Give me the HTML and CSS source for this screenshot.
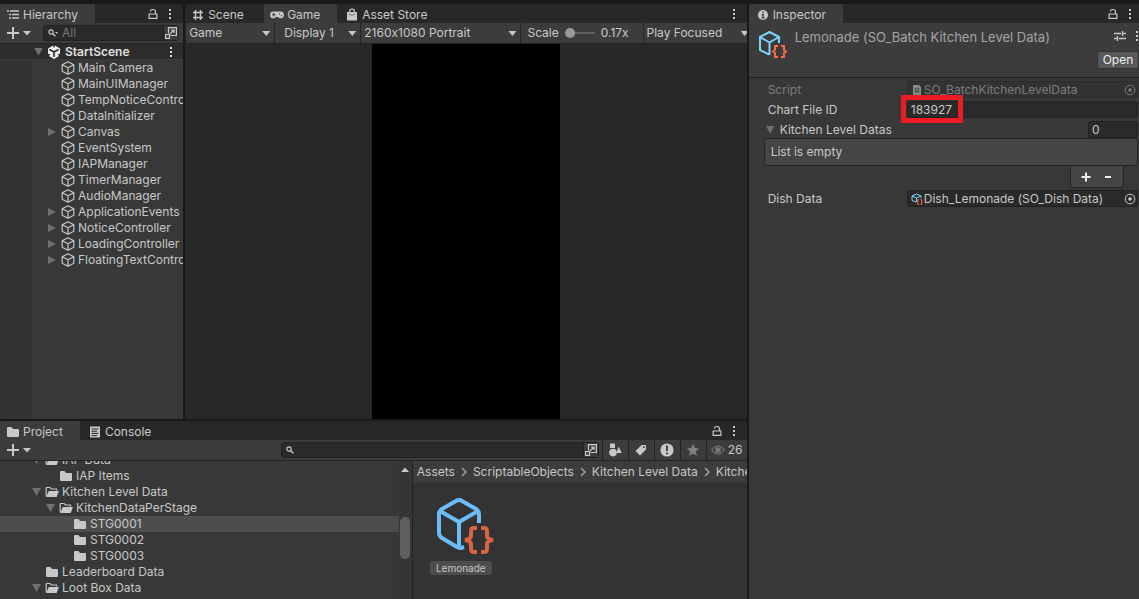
FILE: index.html
```html
<!DOCTYPE html>
<html lang="en">
<head>
<meta charset="utf-8">
<title>Lemonade - Editor</title>
<link rel="stylesheet" href="styles.css">
</head>
<body>
<svg class="sprites" aria-hidden="true">
  <symbol id="cube" viewBox="0 0 14 14"><path d="M7 .8 12.8 3.7V10.3L7 13.2 1.2 10.3V3.7ZM1.2 3.7 7 6.7 12.8 3.7M7 6.7V13.2" fill="none" stroke="currentColor" stroke-width="1.2" stroke-linejoin="round"/></symbol>
  <symbol id="folder" viewBox="0 0 14 12"><path d="M1 2Q1 1 2 1H5.5L7 3H12Q13 3 13 4V10Q13 11 12 11H2Q1 11 1 10Z" fill="currentColor"/></symbol>
  <symbol id="folder-open" viewBox="0 0 14 12"><path d="M1.2 10.5V2Q1.2 1.5 1.7 1.5H5L6.5 3H11.5V4.5" fill="none" stroke="currentColor" stroke-width="1.2"/><path d="M3.8 5H14L11.7 11H1.2Z" fill="currentColor"/></symbol>
  <symbol id="lock" viewBox="0 0 10 12"><path d="M2.5 3.5Q2.5 1.5 5 1.5T7.5 3.7V6M1.1 6H8.9V10.4H1.1Z" fill="none" stroke="currentColor" stroke-width="1.2"/></symbol>
  <symbol id="dots" viewBox="0 0 4 12"><path d="M1 1H3V3H1ZM1 5H3V7H1ZM1 9H3V11H1Z" fill="currentColor"/></symbol>
  <symbol id="plus" viewBox="0 0 12 12"><path d="M6 0V12M0 6H12" stroke="currentColor" stroke-width="2"/></symbol>
  <symbol id="caret" viewBox="0 0 8 5"><path d="M0 0H8L4 4.5Z" fill="currentColor"/></symbol>
  <symbol id="search" viewBox="0 0 10 8"><circle cx="3" cy="3" r="2.1" fill="none" stroke="currentColor" stroke-width="1.2"/><path d="M4.6 4.6 7.3 7.3" stroke="currentColor" stroke-width="1.4"/></symbol>
  <symbol id="popout" viewBox="0 0 12 12"><path d="M3.5 6.5V.6H11.4V8.5H5.5M.6 7.5H4.5V11.4H.6ZM5 7 9 3M6 3H9V6" fill="none" stroke="currentColor" stroke-width="1.2"/></symbol>
  <symbol id="so" viewBox="0 0 58 58"><g fill="none" stroke-linejoin="round"><path d="M28 51 25 52Q23 52 21 51L6 42Q3 40 3 37V18Q3 15 6 13L20 5Q23 3 26 5L40 13Q43 15 43 18V27M4 15 23 26 42 15M23 26V51" stroke="#6abdf8" stroke-width="4"/><path d="M41 32H38Q35 32 35 35V40Q35 43 29 44 35 45 35 48V53Q35 56 38 56H41M45 32H48Q51 32 51 35V40Q51 43 57 44 51 45 51 48V53Q51 56 48 56H45" stroke="#db6340" stroke-width="4" stroke-linejoin="miter"/></g></symbol>
  <symbol id="so-head" viewBox="0 0 30 30"><g fill="none" stroke-width="2"><path d="M12 25.5 3 21V8L12.5 3 22 8V14M3 8 12.5 13.5 22 8M12.5 13.5V26" stroke="#7bd3ff" stroke-linejoin="round"/><path d="M21 17H18V21L16 22.5 18 24V28H21M24 17H27V21L29 22.5 27 24V28H24" stroke="#ff6b3d"/></g></symbol>
  <symbol id="so-mini" viewBox="0 0 12 12"><g fill="none"><path d="M5 9 1 7.5V3L5.5 1 10 3V5M1 3 5.5 5 10 3M5.5 5V9" stroke="#7bd3ff"/><path d="M8 6.5H7V8.5L6 9 7 9.5V11.5H8M9.5 6.5H10.5V8.5L11.5 9 10.5 9.5V11.5H9.5" stroke="#ff6b3d"/></g></symbol>
  <symbol id="target" viewBox="0 0 12 12"><circle cx="6" cy="6" r="4.8" fill="none" stroke="currentColor"/><circle cx="6" cy="6" r="1.8" fill="currentColor"/></symbol>
  <symbol id="chevron" viewBox="0 0 6 10"><path d="M1 1 5 5 1 9" fill="none" stroke="currentColor" stroke-width="1.6"/></symbol>
</svg>
<main class="editor">
  <section class="panel hierarchy">
    <header class="tabs">
      <button class="tab active"><svg width="12" height="12" viewBox="0 0 12 12"><path d="M0 2H2M3 2H12M2 5.5H4M5 5.5H12M2 9H4M5 9H12" stroke="currentColor" stroke-width="1.3"/></svg>Hierarchy</button>
      <span class="tools"><button class="ico" aria-label="Lock"><svg width="10" height="12"><use href="#lock"/></svg></button><button class="ico" aria-label="More"><svg width="4" height="12"><use href="#dots"/></svg></button></span>
    </header>
    <div class="bar">
      <button class="ico add" aria-label="Add"><svg width="12" height="12"><use href="#plus"/></svg><svg width="8" height="5"><use href="#caret"/></svg></button>
      <label class="search"><svg width="10" height="8"><use href="#search"/><path d="M7 3H10L8.5 5Z" fill="currentColor"/></svg><input type="text" placeholder="All" aria-label="Search hierarchy"><span class="pop"><svg width="12" height="12"><use href="#popout"/></svg></span></label>
    </div>
    <div class="scene-row"><i class="down"></i><svg width="14" height="14" viewBox="0 0 14 14"><path d="M7 0 13 3.4V10.6L7 14 1 10.6V3.4Z" fill="#eee"/><path d="M7 7V12M7 7 2.5 4.5M7 7 11.5 4.5" stroke="#2c2c2c" stroke-width="1.6" fill="none"/><path d="M5.8 0H8.2L7 3.2ZM0 8.5 3.4 9.3 1 12ZM14 8.5 10.6 9.3 13 12Z" fill="#2c2c2c"/></svg><b>StartScene</b><button class="ico" aria-label="Scene menu"><svg width="4" height="12"><use href="#dots"/></svg></button></div>
    <ul class="tree objects">
      <li><i></i><svg><use href="#cube"/></svg>Main Camera</li>
      <li><i></i><svg><use href="#cube"/></svg>MainUIManager</li>
      <li><i></i><svg><use href="#cube"/></svg>TempNoticeController</li>
      <li><i></i><svg><use href="#cube"/></svg>DataInitializer</li>
      <li><i class="right"></i><svg><use href="#cube"/></svg>Canvas</li>
      <li><i></i><svg><use href="#cube"/></svg>EventSystem</li>
      <li><i></i><svg><use href="#cube"/></svg>IAPManager</li>
      <li><i></i><svg><use href="#cube"/></svg>TimerManager</li>
      <li><i></i><svg><use href="#cube"/></svg>AudioManager</li>
      <li><i class="right"></i><svg><use href="#cube"/></svg>ApplicationEvents</li>
      <li><i class="right"></i><svg><use href="#cube"/></svg>NoticeController</li>
      <li><i class="right"></i><svg><use href="#cube"/></svg>LoadingController</li>
      <li><i class="right"></i><svg><use href="#cube"/></svg>FloatingTextController</li>
    </ul>
  </section>

  <section class="panel game">
    <header class="tabs">
      <button class="tab scene-tab"><svg width="12" height="12" viewBox="0 0 12 12"><path d="M3.5 1V11M8.5 1V11M1 3.5H11M1 8.5H11" stroke="currentColor" stroke-width="1.4"/></svg>Scene</button>
      <button class="tab active game-tab"><svg width="14" height="10" viewBox="0 0 14 10"><path d="M3.5 1.5H10.5A3.3 3.3 0 0 1 10.5 8.3Q9 8.3 8 7H6Q5 8.3 3.5 8.3A3.4 3.4 0 0 1 3.5 1.5Z" fill="currentColor"/><path d="M2 4.8H5.4M3.7 3.1V6.5M9 4H10.2M10.8 5.7H12" stroke="#3c3c3c" stroke-width="1.1"/></svg>Game</button>
      <button class="tab store-tab"><svg width="12" height="14" viewBox="0 0 12 14"><path d="M1 4H11V12.5H1Z" fill="currentColor"/><path d="M3.7 5V3Q3.7 1.2 6 1.2T8.3 3V5" fill="none" stroke="currentColor" stroke-width="1.2"/><path d="M3.7 5.3V6.5Q6 8.5 8.3 6.5V5.3" fill="none" stroke="#777"/></svg>Asset Store</button>
      <span class="tools"><button class="ico" aria-label="More"><svg width="4" height="12"><use href="#dots"/></svg></button></span>
    </header>
    <div class="bar game-bar">
      <label class="pick mode"><select aria-label="View"><option>Game</option></select></label>
      <label class="pick display"><select aria-label="Display"><option>Display 1</option></select></label>
      <label class="pick ratio"><select aria-label="Resolution"><option>2160x1080 Portrait</option></select></label>
      <label class="scale">Scale<input type="range" min="0" max="100" value="0"><span>0.17x</span></label>
      <label class="pick focus"><select aria-label="Play mode"><option>Play Focused</option></select></label>
    </div>
    <div class="stage"><div class="screen"></div></div>
  </section>

  <section class="panel project">
    <header class="tabs">
      <button class="tab active"><svg width="14" height="12"><use href="#folder"/></svg>Project</button>
      <button class="tab console-tab"><svg width="12" height="12" viewBox="0 0 12 12"><path d="M1 .5H11V11.5H1Z" fill="currentColor"/><path d="M2.5 3H9.5M2.5 5.2H8M2.5 7.4H9.5M2.5 9.6H8" stroke="#282828"/></svg>Console</button>
      <span class="tools"><button class="ico" aria-label="Lock"><svg width="10" height="12"><use href="#lock"/></svg></button><button class="ico" aria-label="More"><svg width="4" height="12"><use href="#dots"/></svg></button></span>
    </header>
    <div class="bar project-bar">
      <button class="ico add" aria-label="Add"><svg width="12" height="12"><use href="#plus"/></svg><svg width="8" height="5"><use href="#caret"/></svg></button>
      <label class="search"><svg width="10" height="8"><use href="#search"/></svg><input type="text" aria-label="Search assets"><span class="pop"><svg width="12" height="12"><use href="#popout"/></svg></span></label>
      <button class="filter" aria-label="Filter by type"><svg width="14" height="14" viewBox="0 0 14 14"><path d="M2 .5H7V5H2ZM10.5 3.5 13.8 10H8.5Z" fill="currentColor"/><circle cx="5" cy="9.6" r="3.8" fill="currentColor"/></svg></button>
      <button class="filter" aria-label="Filter by label"><svg width="12" height="12" viewBox="0 0 12 12"><path fill-rule="evenodd" d="M6.5 1H11V5.5L5 11.5.5 7ZM9 2.3A.9.9 0 1 0 9 4.1.9.9 0 0 0 9 2.3" fill="currentColor"/></svg></button>
      <button class="filter" aria-label="Errors"><svg width="14" height="14" viewBox="0 0 14 14"><circle cx="7" cy="7" r="6.6" fill="currentColor"/><path d="M7 2.5V8M7 9.5V11.3" stroke="#333" stroke-width="1.7"/></svg></button>
      <button class="filter dim" aria-label="Favorites"><svg width="14" height="14" viewBox="0 0 14 14"><path d="M7 .8 8.8 5 13.2 5.4 9.8 8.3 10.8 12.8 7 10.4 3.2 12.8 4.2 8.3.8 5.4 5.2 5Z" fill="currentColor"/></svg></button>
      <button class="filter hidden-count"><svg width="14" height="10" viewBox="0 0 14 10"><path d="M.7 5Q7-3 13.3 5 7 13 .7 5Z" fill="none" stroke="#777" stroke-width="1.2"/><circle cx="7" cy="5" r="2.8" fill="#777"/></svg>26</button>
    </div>
    <div class="browser">
      <div class="folders">
        <ul class="tree">
          <li class="l1"><i class="down"></i><svg><use href="#folder-open"/></svg>IAP Data</li>
          <li class="l2"><i></i><svg><use href="#folder"/></svg>IAP Items</li>
          <li class="l1"><i class="down"></i><svg><use href="#folder-open"/></svg>Kitchen Level Data</li>
          <li class="l2"><i class="down"></i><svg><use href="#folder-open"/></svg>KitchenDataPerStage</li>
          <li class="l3 selected"><i></i><svg><use href="#folder"/></svg>STG0001</li>
          <li class="l3"><i></i><svg><use href="#folder"/></svg>STG0002</li>
          <li class="l3"><i></i><svg><use href="#folder"/></svg>STG0003</li>
          <li class="l1"><i></i><svg><use href="#folder"/></svg>Leaderboard Data</li>
          <li class="l1"><i class="down"></i><svg><use href="#folder-open"/></svg>Loot Box Data</li>
        </ul>
      </div>
      <div class="scroll"><svg width="8" height="5" viewBox="0 0 8 5"><path d="M0 5H8L4 .5Z" fill="currentColor"/></svg><span class="thumb"></span></div>
      <div class="assets">
        <nav class="crumbs"><a href="#">Assets</a><svg width="6" height="10"><use href="#chevron"/></svg><a href="#">ScriptableObjects</a><svg width="6" height="10"><use href="#chevron"/></svg><a href="#">Kitchen Level Data</a><svg width="6" height="10"><use href="#chevron"/></svg><a href="#">KitchenDataPerStage</a></nav>
        <figure class="asset"><svg width="58" height="58"><use href="#so"/></svg><figcaption>Lemonade</figcaption></figure>
      </div>
    </div>
  </section>

  <section class="panel inspector">
    <header class="tabs">
      <button class="tab active"><svg width="10" height="10" viewBox="0 0 10 10"><circle cx="5" cy="5" r="5" fill="currentColor"/><path d="M5 1.6V3.2M3.8 4.6H5.2V8M3.6 7.8H6.6" stroke="#333" stroke-width="1.3" fill="none"/></svg>Inspector</button>
      <span class="tools"><button class="ico" aria-label="Lock"><svg width="10" height="12"><use href="#lock"/></svg></button><button class="ico" aria-label="More"><svg width="4" height="12"><use href="#dots"/></svg></button></span>
    </header>
    <div class="head">
      <svg width="30" height="30"><use href="#so-head"/></svg>
      <h1>Lemonade (SO_Batch Kitchen Level Data)</h1>
      <div class="head-side">
        <span><button class="ico" aria-label="Presets"><svg width="12" height="12" viewBox="0 0 12 12"><path d="M0 3.5H7M9 3.5H12M8.5 1V6M0 8.5H3M5 8.5H12M3.5 6V11" stroke="currentColor" stroke-width="1.3"/></svg></button><button class="ico" aria-label="More"><svg width="4" height="12"><use href="#dots"/></svg></button></span>
        <button class="open">Open</button>
      </div>
    </div>
    <div class="props">
      <div class="prop off"><span>Script</span><div class="field object"><svg width="12" height="12" viewBox="0 0 12 12"><path d="M2 1H8L10 3V11H2Z" fill="#8a8a8a"/><path d="M4.8 3.5V9M7.2 3.5V9M3.5 5H8.5M3.5 7.5H8.5" stroke="#365c40"/></svg><span>SO_BatchKitchenLevelData</span><button class="ico" aria-label="Select script" disabled><svg width="12" height="12"><use href="#target"/></svg></button></div></div>
      <div class="prop"><label for="chart">Chart File ID</label><div class="marked"><input class="field" id="chart" type="text" value="183927"></div></div>
      <div class="prop list-head"><label for="size"><i class="down"></i>Kitchen Level Datas</label><input class="field" id="size" type="text" value="0"></div>
      <div class="empty">List is empty</div>
      <div class="list-foot"><button class="ico" aria-label="Add item"><svg width="10" height="10" viewBox="0 0 10 10"><path d="M5 .5V9.5M.5 5H9.5" stroke="currentColor" stroke-width="2"/></svg></button><button class="ico" aria-label="Remove item"><svg width="10" height="10" viewBox="0 0 10 10"><path d="M2 5H8" stroke="currentColor" stroke-width="2"/></svg></button></div>
      <div class="prop"><span>Dish Data</span><div class="field object"><svg width="12" height="12"><use href="#so-mini"/></svg><span>Dish_Lemonade (SO_Dish Data)</span><button class="ico" aria-label="Select dish"><svg width="12" height="12"><use href="#target"/></svg></button></div></div>
    </div>
  </section>
</main>
</body>
</html>
```

FILE: styles.css
```css
*, *::after { box-sizing: border-box; }
body { margin: 0; background: #191919; color: #c8c8c8; font: 12px/16px Inter, "Noto Sans", sans-serif; font-variant-ligatures: no-contextual; }
button, input, select { font: inherit; font-variant-ligatures: inherit; color: inherit; border: 0; margin: 0; padding: 0; background: none; min-width: 0; }
ul { list-style: none; margin: 0; padding: 0; }
svg { flex: none; display: block; }
.sprites { position: absolute; width: 0; height: 0; }

.editor { display: grid; grid-template: minmax(0, 1fr) 178px / 183fr 561fr 390fr; gap: 2px; height: 100vh; padding-top: 4px; overflow: hidden; }
.panel { display: flex; flex-direction: column; min-width: 0; min-height: 0; overflow: hidden; background: #383838; border-radius: 2px 2px 0 0; }
.project { grid-area: 2 / 1 / 3 / 3; }
.inspector { grid-area: 1 / 3 / 3 / 4; }

.tabs { display: flex; flex: none; height: 19px; background: #282828; }
.tab { display: flex; align-items: center; gap: 4px; padding: 2px 17px 0 7px; white-space: nowrap; }
.tab.active { background: #3c3c3c; border-radius: 2px 2px 0 0; }
.game .tab { width: 79px; padding-right: 0; }
.game .game-tab { width: 73px; padding-left: 6px; gap: 3px; }
.game .store-tab { width: auto; padding-left: 9px; }
.inspector .tab { padding-left: 9px; gap: 5px; }
.tools { display: flex; gap: 10px; margin-left: auto; padding-right: 11px; }
.inspector .tools { padding-right: 7px; }
.ico { display: flex; align-items: center; justify-content: center; }

.bar { display: flex; flex: none; align-items: center; height: 21px; background: #3c3c3c; border-bottom: 1px solid #232323; }
.add { gap: 4px; padding-left: 7px; }
.search { display: flex; flex: 1; align-items: center; gap: 4px; min-width: 0; height: 16px; margin: 0 4px 0 12px; padding-left: 4px; background: #2a2a2a; border: 1px solid #212121; border-radius: 3px; }
.search input { flex: 1; width: 0; outline: 0; }
.search input::placeholder { color: #777; opacity: 1; }
.pop { display: flex; align-items: center; height: 14px; padding: 0 1px; background: #3c3c3c; border-left: 1px solid #212121; }

.scene-row { display: flex; flex: none; align-items: center; gap: 4px; height: 16px; padding: 0 10px 0 34px; background: #2c2c2c; border-bottom: 1px solid #3c3c3c; color: #e0e0e0; }
.scene-row b { flex: 1; font-weight: 600; }
.down, .right { background: #707070; }
.down { width: 9px; height: 8px; clip-path: polygon(0 0, 100% 0, 50% 100%); }
.tree li { display: flex; align-items: center; height: 16px; white-space: nowrap; }
.tree i { flex: none; width: 9px; height: 8px; margin-right: 4px; }
.tree .right { clip-path: polygon(0 0, 90% 50%, 0 100%); }
.tree svg { width: 14px; height: 14px; margin-right: 3px; }
.objects { flex: 1; padding-left: 48px; background: linear-gradient(90deg, #323232 32px, #383838 32px); }

.game-bar { display: grid; grid-template-columns: 89fr 86fr 160fr 122fr 104fr; align-items: stretch; }
.game-bar label { display: flex; align-items: center; min-width: 0; border-left: 1px solid #252525; white-space: nowrap; }
.pick { position: relative; }
.pick select { width: 100%; appearance: none; outline: 0; }
.pick::after { content: ""; position: absolute; right: 4px; top: 8px; width: 8px; height: 5px; background: #c8c8c8; clip-path: polygon(0 0, 100% 0, 50% 100%); pointer-events: none; }
.mode { padding-left: 3px; }
.display { padding-left: 9px; }
.ratio { padding-left: 3px; }
.scale { gap: 6px; padding-left: 6px; }
.focus { padding-left: 3px; }
.focus::after { right: -2px; }
.scale input { appearance: none; width: 30px; height: 10px; background: linear-gradient(#606060, #606060) center / 100% 2px no-repeat; }
.scale input::-webkit-slider-thumb { appearance: none; width: 10px; height: 10px; border-radius: 50%; background: #999; }
.stage { flex: 1; display: flex; justify-content: center; min-height: 0; background: #282828; }
.screen { height: 100%; aspect-ratio: 1 / 2; background: #000; }

.project .tab { padding-left: 6px; gap: 3px; }
.project .console-tab { gap: 4px; padding-left: 9px; }
.project-bar .search { flex: none; width: 42.5%; margin: 0 3px 0 auto; }
.filter { display: flex; align-items: center; justify-content: center; gap: 3px; width: 26px; height: 20px; border-left: 1px solid #232323; }
.dim { color: #808080; }
.hidden-count { width: 41px; }
.browser { display: flex; flex: 1; min-height: 0; overflow: hidden; }
.folders { flex: 399; min-width: 0; overflow: hidden; }
.folders .tree { margin-top: -9px; }
.folders .tree svg { height: 12px; }
.l1 { padding-left: 32px; }
.l2 { padding-left: 46px; }
.l3 { padding-left: 60px; }
.selected { background: #4d4d4d; }
.scroll { display: flex; flex: none; flex-direction: column; align-items: center; width: 14px; padding-top: 6px; background: #353535; border-right: 1px solid #232323; }
.thumb { width: 10px; height: 42px; margin-top: 45px; border-radius: 5px; background: #5f5f5f; }
.assets { flex: 334; min-width: 0; overflow: hidden; background: #333; }
.crumbs { display: flex; align-items: center; gap: 6px; height: 21px; padding-left: 4px; background: #3c3c3c; white-space: nowrap; }
.crumbs a { color: inherit; text-decoration: none; }
.crumbs svg { color: #999; }
.asset { display: flex; flex-direction: column; align-items: center; width: 64px; margin: 14px 0 0 16px; }
.asset svg { margin-left: 8px; }
.asset figcaption { margin-top: 7px; padding: 0 6px; border-radius: 3px; background: #4d4d4d; font-size: 10px; line-height: 14px; }

.head { display: flex; flex: none; height: 55px; padding: 6px 0 0 8px; background: #3c3c3c; border-bottom: 1px solid #1f1f1f; color: #c8c8c8; }
.head h1 { flex: 1; margin: 0 0 0 8px; font-size: 13px; font-weight: 400; line-height: 16px; color: #a5a5a5; white-space: nowrap; }
.head-side { display: flex; flex-direction: column; align-items: flex-end; gap: 9px; }
.head-side span { display: flex; gap: 9px; padding-top: 1px; }
.open { width: 42px; height: 18px; border: 1px solid #303030; border-radius: 3px 0 0 3px; background: #585858; color: #eee; }
.props { padding: 3px 1px 0 15px; }
.prop { display: grid; grid-template-columns: 139fr 231fr; align-items: center; height: 17px; margin: 0 0 3px 4px; white-space: nowrap; }
.field { width: 100%; height: 17px; padding: 0 3px; background: #2a2a2a; border: 1px solid #212121; border-radius: 3px; outline: 0; }
.object { display: flex; align-items: center; gap: 1px; padding-right: 1px; }
.object span { flex: 1; }
.off { color: #7c7c7c; }
.off .field { background: #323232; border-color: #2c2c2c; }
.marked { position: relative; display: flex; }
.marked::after { content: ""; position: absolute; left: -6px; top: -6px; width: 62px; height: 28px; border: 5px solid #ed1c24; pointer-events: none; }
.list-head { grid-template-columns: 1fr 50px; margin: 0 0 0 2px; }
.list-head label { display: flex; align-items: center; gap: 5px; }
.empty { height: 28px; padding: 5px 6px; border: 1px solid #242424; border-radius: 3px; background: #454545; }
.list-foot { display: flex; justify-content: center; gap: 12px; width: 54px; height: 22px; margin: 0 14px 2px auto; border: 1px solid #242424; border-top: 0; border-radius: 0 0 3px 3px; background: #454545; color: #eee; }
```
